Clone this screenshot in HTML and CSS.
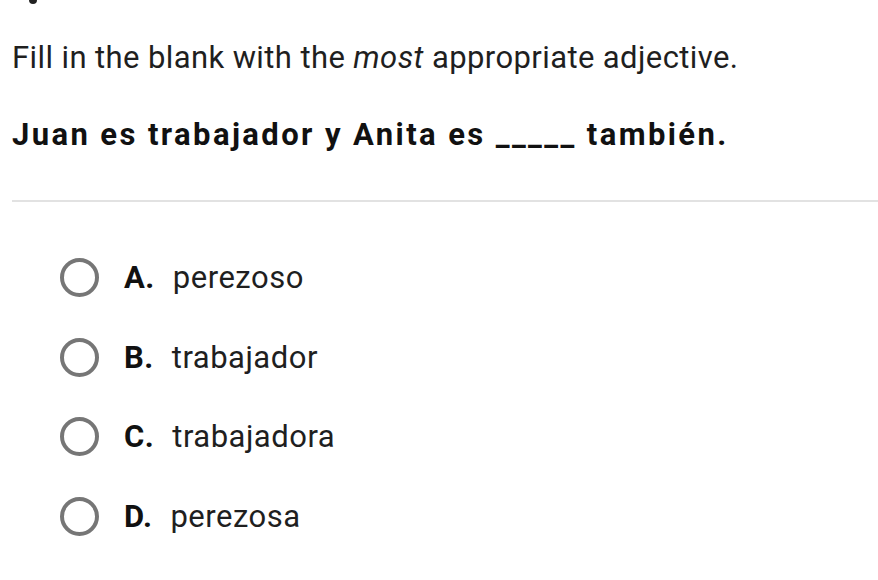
FILE: index.html
```html
<!DOCTYPE html>
<html lang="en">
<head>
<meta charset="utf-8">
<link rel="stylesheet" href="styles.css">
</head>
<body>
<div class="page">
  <div class="crumb"></div>
  <p class="prompt">Fill in the blank with the <em>most</em> appropriate adjective.</p>
  <p class="sentence">Juan es trabajador y Anita es _____ también.</p>
  <div class="divider"></div>
  <ul class="options">
    <li class="option"><span class="radio"></span><span class="letter">A.</span><span class="text">perezoso</span></li>
    <li class="option"><span class="radio"></span><span class="letter">B.</span><span class="text">trabajador</span></li>
    <li class="option"><span class="radio"></span><span class="letter">C.</span><span class="text">trabajadora</span></li>
    <li class="option"><span class="radio"></span><span class="letter">D.</span><span class="text">perezosa</span></li>
  </ul>
</div>
</body>
</html>
```

FILE: styles.css
```css
html, body {
  margin: 0;
  padding: 0;
  background: #ffffff;
}

body {
  font-family: Roboto, "Liberation Sans", sans-serif;
  color: #1f1f1f;
  width: 878px;
  height: 580px;
  overflow: hidden;
}

.page {
  padding-left: 12px;
}

.crumb {
  width: 8px;
  height: 4px;
  margin-left: 17px;
  background: #222;
  border-radius: 0 0 4px 4px;
}

.prompt {
  margin: 36px 0 0 0;
  font-size: 31px;
  line-height: 36px;
  font-weight: 400;
  letter-spacing: 0.4px;
  white-space: nowrap;
}

.prompt em {
  font-style: italic;
}

.sentence {
  margin: 41px 0 0 0;
  font-size: 31px;
  line-height: 36px;
  font-weight: 700;
  letter-spacing: 2.4px;
  color: #111;
  white-space: nowrap;
}

.divider {
  margin-top: 47px;
  height: 2px;
  background: #e2e2e2;
}

.options {
  list-style: none;
  margin: 36px 0 0 0;
  padding: 0 0 0 48px;
}

.option {
  display: flex;
  align-items: center;
  height: 79.5px;
  font-size: 31px;
  letter-spacing: 0.5px;
}

.radio {
  box-sizing: border-box;
  width: 39px;
  height: 39px;
  border: 4px solid #767676;
  border-radius: 50%;
  flex: none;
  margin-right: 25px;
}

.letter {
  font-weight: 700;
  margin-right: 18px;
  color: #111;
}

.text {
  color: #1f1f1f;
}
```
